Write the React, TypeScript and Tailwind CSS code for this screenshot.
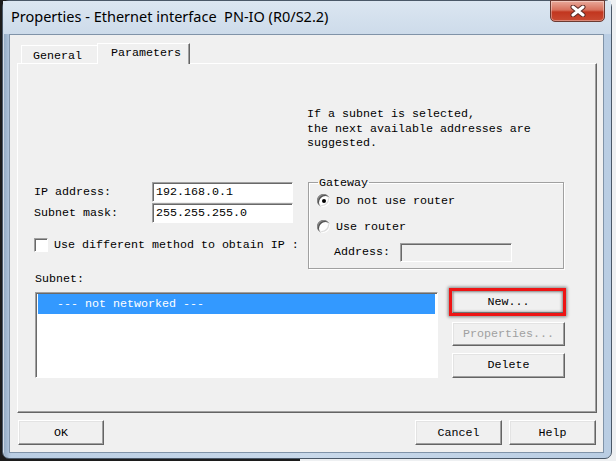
/**
 * Classic Win7 "Properties - Ethernet interface" dialog, Parameters tab.
 */

const raised =
  'flex items-center justify-center bg-[#f0f0f0] border border-t-white border-l-white border-r-[#646464] border-b-[#646464] shadow-[inset_-1px_-1px_0_#a0a0a0,inset_1px_1px_0_#e3e3e3]'
const sunken =
  'border border-t-[#a0a0a0] border-l-[#a0a0a0] border-r-white border-b-white shadow-[inset_1px_1px_0_#696969]'

function Radio({ checked }: { checked?: boolean }) {
  return (
    <span className="inline-flex h-[13px] w-[13px] shrink-0 items-center justify-center rounded-full bg-white shadow-[inset_1px_1px_0_#8a8a8a,inset_2px_2px_0_#505050,inset_-1px_-1px_0_#ffffff,inset_-2px_-2px_0_#dcdcdc]">
      {checked && <span className="h-[4px] w-[4px] rounded-full bg-black" />}
    </span>
  )
}

function Btn({ label, disabled, className = '' }: { label: string; disabled?: boolean; className?: string }) {
  return (
    <div className={`${raised} ${disabled ? 'text-[#a0a0a0]' : 'text-black'} ${className}`}>
      {label}
    </div>
  )
}

function CloseButton() {
  return (
    <div className="absolute right-[6px] top-[-1px] flex h-[22px] w-[55px] items-center justify-center rounded-b-[5px] border border-[#6b3a32] bg-[linear-gradient(180deg,#e9a99a_0%,#d7705c_45%,#c2361f_55%,#c94a32_100%)] shadow-[inset_0_0_0_1px_rgba(255,255,255,0.35)]">
      <svg width="16" height="12" viewBox="0 0 16 12">
        <path d="M3 2 L13 10 M13 2 L3 10" stroke="#5a2a24" strokeWidth="5" strokeLinecap="round" />
        <path d="M3 2 L13 10 M13 2 L3 10" stroke="#ffffff" strokeWidth="3" strokeLinecap="round" />
      </svg>
    </div>
  )
}

export default function App() {
  return (
    <div className="h-[461px] w-[616px] overflow-hidden bg-[linear-gradient(90deg,#1c1c1c_0px,#1c1c1c_300px,#eef0f2_300px)]">
      <div className="relative ml-[2px] flex h-[459px] w-[610px] flex-col rounded-[7px] border border-[#4a5868] bg-[linear-gradient(90deg,#8fa7c0_0px,#b9cde3_8px,#c9d9ea_50%,#b9cde3_100%)] shadow-[inset_1px_1px_0_rgba(255,255,255,0.6)]">
        {/* title bar */}
        <div className="flex h-[33px] items-center bg-[linear-gradient(180deg,#dbe6f1,#cddbea)] pl-[8px] pb-[2px] font-['Noto_Sans',sans-serif] text-[14.5px] text-black">
          Properties - Ethernet interface&nbsp; PN-IO (R0/S2.2)
        </div>
        <CloseButton />

        {/* client area */}
        <div className="ml-[6px] flex h-[419px] w-[595px] flex-col border border-[#8093a8] bg-[#f0f0f0] pl-[7px] pt-[8px] font-['Liberation_Mono',monospace] text-[11.67px] leading-[14px] text-black">
          {/* tabs */}
          <div className="relative z-10 -mb-px flex h-[21px] items-end pl-[4px]">
            <div className="flex h-[19px] w-[77px] items-center border-l border-t border-l-white border-t-white pl-[11px] pt-[1px]">
              General
            </div>
            <div className="-ml-px flex h-[21px] w-[93px] items-center border-l border-r border-t border-l-white border-r-[#646464] border-t-white bg-[#f0f0f0] pl-[13px] pb-[2px] shadow-[inset_-1px_0_0_#a0a0a0]">
              Parameters
            </div>
          </div>

          {/* tab page */}
          <div className="flex h-[350px] w-[580px] flex-col border border-b-[#646464] border-l-white border-r-[#646464] border-t-white pt-[43px] shadow-[inset_-1px_-1px_0_#a0a0a0]">
            <div className="ml-[289px] leading-[14.5px]">
              <div>If a subnet is selected,</div>
              <div>the next available addresses are</div>
              <div>suggested.</div>
            </div>

            <div className="mt-[25px] flex">
              {/* address fields */}
              <div className="w-[290px] pl-[16px] pt-[6px]">
                <div className="flex h-[20px] items-center">
                  <span className="w-[118px]">IP address:</span>
                  <div className={`flex h-[20px] w-[141px] items-center bg-white pl-[3px] ${sunken}`}>192.168.0.1</div>
                </div>
                <div className="mt-[1px] flex h-[20px] items-center">
                  <span className="w-[118px]">Subnet mask:</span>
                  <div className={`flex h-[20px] w-[141px] items-center bg-white pl-[3px] ${sunken}`}>255.255.255.0</div>
                </div>
                <div className="mt-[15px] flex h-[14px] items-center whitespace-nowrap">
                  <span className={`h-[14px] w-[14px] shrink-0 bg-white ${sunken}`} />
                  <span className="ml-[6px]">Use different method to obtain IP :</span>
                </div>
              </div>

              {/* gateway */}
              <fieldset className="h-[93px] w-[256px] border border-[#a0a0a0] pl-[8px] shadow-[1px_1px_0_#ffffff,inset_1px_1px_0_#ffffff]">
                <legend className="ml-[1px] px-[1px]">Gateway</legend>
                <div className="mt-[4px] flex h-[14px] items-center">
                  <Radio checked />
                  <span className="ml-[6px]">Do not use router</span>
                </div>
                <div className="mt-[12px] flex h-[14px] items-center">
                  <Radio />
                  <span className="ml-[6px]">Use router</span>
                </div>
                <div className="mt-[9px] flex h-[19px] items-center pl-[17px]">
                  <span className="w-[66px]">Address:</span>
                  <div className={`h-[19px] w-[112px] bg-[#f0f0f0] ${sunken}`} />
                </div>
              </fieldset>
            </div>

            <div className="ml-[17px] mt-[3px]">Subnet:</div>

            <div className="mt-[6px] flex">
              <div className={`ml-[17px] h-[86px] w-[403px] bg-white p-[2px] pt-px ${sunken}`}>
                <div className="flex h-[20px] items-center bg-[#3399ff] pl-[19px] text-white">--- not networked ---</div>
              </div>
              <div className="-mt-[2px] ml-[14px] flex w-[113px] flex-col">
                <div className="relative">
                  <Btn label="New..." className="h-[24px]" />
                  <div className="absolute -bottom-[2px] -left-[3px] -right-[1px] -top-[2px] border-[3px] border-[#ee1414] shadow-[0_0_3px_1px_rgba(0,0,0,0.45),inset_0_0_3px_1px_rgba(0,0,0,0.45)]" />
                </div>
                <Btn label="Properties..." disabled className="mt-[8px] h-[24px]" />
                <Btn label="Delete" className="mt-[7px] h-[25px]" />
              </div>
            </div>
          </div>

          {/* dialog buttons */}
          <div className="mt-[7px] flex w-[580px] px-px">
            <Btn label="OK" className="h-[25px] w-[86px]" />
            <Btn label="Cancel" className="ml-auto h-[25px] w-[87px]" />
            <Btn label="Help" className="ml-[7px] h-[25px] w-[87px]" />
          </div>
        </div>
      </div>
    </div>
  )
}
